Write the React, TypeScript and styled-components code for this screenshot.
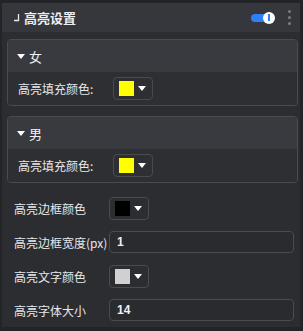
import React from "react";
import styled, { createGlobalStyle } from "styled-components";

const Global = createGlobalStyle`
  html, body { margin: 0; padding: 0; background: #232428; }
  body { font-family: "Noto Sans CJK SC", "Noto Sans", sans-serif; color: #e8e8ea; }
  * { box-sizing: border-box; }
`;

const Frame = styled.div`
  width: 303px;
  height: 331px;
  padding: 3px 3px 4px 2px;
  background: #232428;
`;

const Panel = styled.div`
  height: 100%;
  background: #2c2d31;
  display: flex;
  flex-direction: column;
  overflow: hidden;
`;

const Header = styled.div`
  height: 30px;
  background: #36373c;
  display: flex;
  align-items: center;
  padding: 0 8px 0 11px;
`;

const Title = styled.div`
  display: flex;
  align-items: center;
  gap: 4px;
  font-size: 13px;
  font-weight: 700;
  color: #eceef2;
  flex: 1;
`;

const Toggle = styled.div`
  position: relative;
  width: 24px;
  height: 12px;
  margin-right: 13px;
`;

const Track = styled.div`
  position: absolute;
  left: 0;
  top: 2px;
  width: 20px;
  height: 8px;
  border-radius: 4px;
  background: #2f80f6;
`;

const Knob = styled.div`
  position: absolute;
  right: 0;
  top: 0;
  width: 12px;
  height: 12px;
  border-radius: 50%;
  background: #ffffff;
  display: flex;
  align-items: center;
  justify-content: center;
  &::after {
    content: "";
    width: 2px;
    height: 7px;
    background: #2f80f6;
  }
`;

const Dots = styled.div`
  display: flex;
  flex-direction: column;
  gap: 3px;
  padding-right: 1px;
  span {
    width: 3px;
    height: 3px;
    border-radius: 50%;
    background: #7c7d82;
  }
`;

const Body = styled.div`
  padding: 7px 2px 0 5px;
  display: flex;
  flex-direction: column;
`;

const Group = styled.div`
  border: 1px solid #4a4b50;
  border-radius: 4px;
  overflow: hidden;
  margin-bottom: 10px;
`;

const GroupHeader = styled.div`
  height: 32px;
  background: #393a3f;
  display: flex;
  align-items: center;
  padding-left: 9px;
  gap: 4px;
  font-size: 13px;
  color: #f2f2f4;
`;

const Caret = styled.span`
  width: 0;
  height: 0;
  border-left: 4px solid transparent;
  border-right: 4px solid transparent;
  border-top: 5px solid #ffffff;
  display: inline-block;
`;

const GroupContent = styled.div`
  background: #2e2f33;
  height: 33px;
  display: flex;
  align-items: center;
  padding-left: 10px;
`;

const Row = styled.div<{ $first?: boolean }>`
  height: 34px;
  display: flex;
  align-items: center;
  padding-left: 10px;
  margin-top: ${(p) => (p.$first ? "-2px" : "0")};
  margin-left: -3px;
`;

const Label = styled.div`
  width: 95px;
  font-size: 12px;
  color: #e8e8ea;
  white-space: nowrap;
`;

const Picker = styled.div`
  width: 40px;
  height: 23px;
  border: 1px solid #4a4b50;
  border-radius: 4px;
  display: flex;
  align-items: center;
  padding-left: 5px;
  gap: 4px;
`;

const Swatch = styled.div<{ $c: string }>`
  width: 15px;
  height: 15px;
  background: ${(p) => p.$c};
`;

const Input = styled.div`
  width: 185px;
  height: 22px;
  border: 1px solid #4a4b50;
  border-radius: 4px;
  background: #2a2b2f;
  display: flex;
  align-items: center;
  padding-left: 7px;
  font-family: "Liberation Sans", "Noto Sans", sans-serif;
  font-size: 12px;
  font-weight: 700;
  color: #f0f0f2;
`;

const ColorPicker = ({ c }: { c: string }) => (
  <Picker>
    <Swatch $c={c} />
    <Caret />
  </Picker>
);

export default function App() {
  return (
    <>
      <Global />
      <Frame>
        <Panel>
          <Header>
            <Title>
              <svg width="7" height="9" viewBox="0 0 7 9">
                <path d="M5.5 1 V7.5 H1" stroke="#e6e8ee" strokeWidth="1.3" fill="none" />
              </svg>
              高亮设置
            </Title>
            <Toggle>
              <Track />
              <Knob />
            </Toggle>
            <Dots>
              <span />
              <span />
              <span />
            </Dots>
          </Header>
          <Body>
            <Group>
              <GroupHeader>
                <Caret />女
              </GroupHeader>
              <GroupContent>
                <Label>高亮填充颜色:</Label>
                <ColorPicker c="#ffff00" />
              </GroupContent>
            </Group>
            <Group>
              <GroupHeader>
                <Caret />男
              </GroupHeader>
              <GroupContent>
                <Label>高亮填充颜色:</Label>
                <ColorPicker c="#ffff00" />
              </GroupContent>
            </Group>
            <Row $first>
              <Label>高亮边框颜色</Label>
              <ColorPicker c="#000000" />
            </Row>
            <Row>
              <Label>高亮边框宽度(px)</Label>
              <Input>1</Input>
            </Row>
            <Row>
              <Label>高亮文字颜色</Label>
              <ColorPicker c="#d0d0d2" />
            </Row>
            <Row>
              <Label>高亮字体大小</Label>
              <Input>14</Input>
            </Row>
          </Body>
        </Panel>
      </Frame>
    </>
  );
}
